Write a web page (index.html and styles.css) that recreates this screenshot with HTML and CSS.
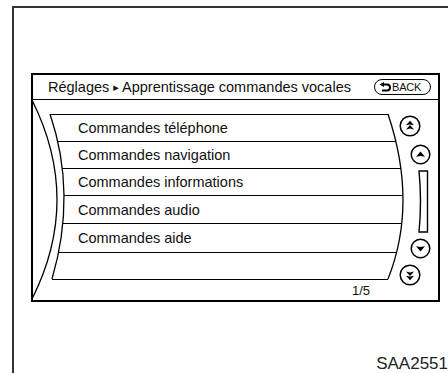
FILE: index.html
```html
<!DOCTYPE html>
<html lang="fr">
<head>
  <meta charset="UTF-8">
  <meta name="viewport" content="width=device-width, initial-scale=1.0">
  <title>Apprentissage commandes vocales</title>
  <link rel="stylesheet" href="styles.css">
</head>
<body>
  <div class="frame">
    <div class="screen">
      <div class="screen-head">
        <span class="title">Réglages <span class="sep">▸</span> Apprentissage commandes vocales</span>
        <span class="back">
          <svg class="back-icon" width="12" height="10" viewBox="0 0 12 10">
            <path d="M4 2.5 H8 A3 3 0 0 1 8 8.5 H3" fill="none" stroke="#000" stroke-width="2"/>
            <path d="M0.5 2.5 L5 0 L5 5 Z" fill="#000"/>
          </svg>BACK</span>
      </div>

      <div class="screen-body">
        <!-- curved edges of the list -->
        <svg class="curves" width="405" height="200" viewBox="0 0 405 200">
          <path d="M-1 0 Q49 100 -1 199" />
          <path d="M17 14 Q44 93.5 19 179" />
          <path d="M355 14 Q385 103.5 355 179" />
        </svg>

        <div class="list">
          <div class="row">Commandes téléphone</div>
          <div class="row">Commandes navigation</div>
          <div class="row">Commandes informations</div>
          <div class="row">Commandes audio</div>
          <div class="row">Commandes aide</div>
          <div class="row"></div>
          <div class="row-end"></div>
          <div class="page-count">1/5</div>
        </div>

        <div class="scroll">
          <svg class="btn btn-far" width="22" height="22" viewBox="0 0 22 22">
            <circle cx="11" cy="11" r="9.8"/>
            <path class="arrow" d="M11 5.8 L15 10.2 L11 9.4 L7 10.2 Z M11 10 L15 14.4 L11 13.6 L7 14.4 Z"/>
          </svg>
          <svg class="btn btn-near btn-up" width="21" height="21" viewBox="0 0 21 21">
            <circle cx="10.5" cy="10.5" r="9.3"/>
            <path class="arrow" d="M10.5 7.6 L15 12.8 L10.5 11.9 L6 12.8 Z"/>
          </svg>
          <svg class="bar" width="12" height="63" viewBox="0 0 12 63">
            <path d="M2 1 H10.5 V62 H2 Q5 31.5 2 1 Z"/>
          </svg>
          <svg class="btn btn-near btn-down" width="21" height="21" viewBox="0 0 21 21">
            <circle cx="10.5" cy="10.5" r="9.3"/>
            <path class="arrow" d="M10.5 13.4 L15 8.2 L10.5 9.1 L6 8.2 Z"/>
          </svg>
          <svg class="btn btn-far btn-down" width="22" height="22" viewBox="0 0 22 22">
            <circle cx="11" cy="11" r="9.8"/>
            <path class="arrow" d="M11 12 L15 7.6 L11 8.4 L7 7.6 Z M11 16.2 L15 11.8 L11 12.6 L7 11.8 Z"/>
          </svg>
        </div>
      </div>
    </div>

    <div class="fig-code">SAA2551</div>
  </div>
</body>
</html>
```

FILE: styles.css
```css
body {
  margin: 0;
  height: 373px;
  overflow: hidden;
  background-color: #fff;
  color: #111;
  font-family: "Liberation Sans", Arial, sans-serif;
}

.frame {
  box-sizing: border-box;
  height: 367px;
  margin: 6px 0 0 12px;
  padding: 65px 0 0 17px;
  border-top: 2px solid #333;
  border-left: 2px solid #333;
}

.screen {
  box-sizing: border-box;
  width: 409px;
  height: 229px;
  border: 2px solid #000;
}

.screen-head {
  display: flex;
  align-items: center;
  justify-content: space-between;
  height: 24px;
  padding: 0 7px 0 15px;
  border-bottom: 1px solid #000;
  font-size: 14.5px;
}

.sep {
  font-family: "DejaVu Sans", sans-serif;
  font-size: 11px;
  vertical-align: 1px;
}

.back {
  box-sizing: border-box;
  display: flex;
  align-items: center;
  gap: 1px;
  width: 57px;
  height: 16px;
  padding: 0 3px 0 4px;
  border: 1.5px solid #000;
  border-radius: 8px;
  font-size: 11px;
  letter-spacing: -0.2px;
}

.back-icon {
  flex: none;
}

.screen-body {
  position: relative;
  display: flex;
  height: 200px;
}

.curves {
  position: absolute;
  left: 0;
  top: 0;
  overflow: visible;
  pointer-events: none;
}

.curves path {
  fill: none;
  stroke: #000;
  stroke-width: 1.3;
}

.list {
  flex: none;
  width: 366px;
  padding-top: 14px;
  font-size: 14.5px;
}

.row {
  box-sizing: border-box;
  display: flex;
  align-items: center;
  height: 27px;
  border-top: 1px solid #000;
}

.row:nth-child(1) { margin-left: 17px; width: 338px; padding-left: 28px; }
.row:nth-child(2) { margin-left: 25px; width: 338px; padding-left: 20px; }
.row:nth-child(3) { margin-left: 29px; width: 339px; padding-left: 16px; }
.row:nth-child(4) { margin-left: 31px; width: 339px; padding-left: 14px; height: 28px; }
.row:nth-child(5) { margin-left: 30px; width: 339px; padding-left: 15px; height: 29px; }
.row:nth-child(6) { margin-left: 26px; width: 338px; }

.row-end {
  margin-left: 19px;
  width: 336px;
  border-top: 1px solid #000;
}

.page-count {
  width: 337px;
  margin-top: 3px;
  text-align: right;
  font-size: 13px;
}

.scroll {
  display: flex;
  flex-direction: column;
  align-items: flex-start;
  padding-top: 15px;
}

.btn circle {
  fill: #fff;
  stroke: #000;
  stroke-width: 1.5;
}

.btn .arrow {
  fill: #000;
}

.btn-near {
  margin-left: 11px;
}

.btn-up {
  margin-top: 7px;
}

.btn-down {
  margin-top: 5px;
}

.bar {
  margin: 5px 0 0 18px;
}

.bar path {
  fill: #fff;
  stroke: #000;
  stroke-width: 1.4;
}

.fig-code {
  margin-top: 52px;
  text-align: right;
  font-size: 17px;
  line-height: 20px;
  color: #222;
}
```
